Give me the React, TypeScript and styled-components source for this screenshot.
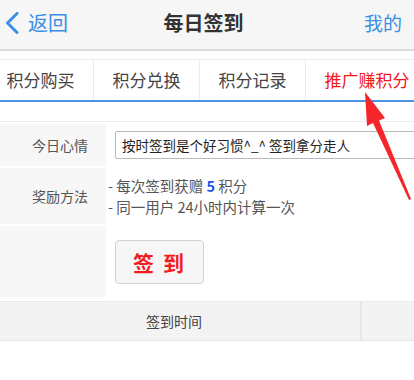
import styled, { createGlobalStyle } from 'styled-components';

const GlobalStyle = createGlobalStyle`
	html, body {
		margin: 0;
		padding: 0;
		background: #fff;
	}
	body {
		font-family: 'Noto Sans CJK SC', 'Noto Sans', sans-serif;
		color: #333;
	}
`;

const tabs = ['积分购买', '积分兑换', '积分记录', '推广赚积分'];

const App = () => {
	return (
		<Page>
			<GlobalStyle />
			<Header>
				<BackLink>
					<svg width="14" height="22" viewBox="0 0 14 22">
						<path d="M12 1.5 L2.5 11 L12 20.5" fill="none" stroke="#3a8ee6" strokeWidth="3" strokeLinecap="round" strokeLinejoin="round" />
					</svg>
					<span>返回</span>
				</BackLink>
				<Title>每日签到</Title>
				<HeaderLink>我的</HeaderLink>
			</Header>

			<TabBar>
				<TabTrack>
					{tabs.map((tab, i) => (
						<Tab key={tab} $active={i === tabs.length - 1}>
							{tab}
						</Tab>
					))}
				</TabTrack>
			</TabBar>

			<Form>
				<Row $height={42}>
					<Label>今日心情</Label>
					<Field>
						<MoodInput defaultValue="按时签到是个好习惯^_^ 签到拿分走人" />
					</Field>
				</Row>
				<Row $height={56}>
					<Label>奖励方法</Label>
					<Field>
						<Rules>
							<li>
								- 每次签到获赠 <Points>5</Points> 积分
							</li>
							<li>- 同一用户 24小时内计算一次</li>
						</Rules>
					</Field>
				</Row>
				<Row $height={71}>
					<Label />
					<Field>
						<SignButton>签 到</SignButton>
					</Field>
				</Row>
			</Form>

			<TableHead>
				<HeadCell>签到时间</HeadCell>
				<HeadCell />
			</TableHead>

			<Arrow width="414" height="380" viewBox="0 0 414 380">
				<polygon
					points="365,92 385,118 379,120.5 411,199 409,200 373,123 367,126"
					fill="#f4262a"
				/>
			</Arrow>
		</Page>
	);
};

export default App;

const Page = styled.div`
	position: relative;
	width: 414px;
	height: 380px;
	overflow: hidden;
	background: #fff;
`;

const Header = styled.div`
	height: 51px;
	display: grid;
	grid-template-columns: 1fr auto 1fr;
	align-items: center;
	padding: 0 12px 4px 5px;
	box-sizing: border-box;
	background: #f6f6f6;
	border-bottom: 2px solid #dcdcdc;
	margin-bottom: 8px;
`;

const BackLink = styled.div`
	display: flex;
	align-items: center;
	gap: 9px;
	color: #3a8ee6;
	font-size: 20px;
`;

const Title = styled.div`
	font-size: 20px;
	font-weight: bold;
	color: #333;
`;

const HeaderLink = styled.div`
	justify-self: end;
	color: #3a8ee6;
	font-size: 19px;
`;

const TabBar = styled.div`
	border-top: 1px solid #ececec;
	border-bottom: 2px solid #4a92e4;
	overflow: hidden;
	white-space: nowrap;
`;

const TabTrack = styled.div`
	display: flex;
	margin-left: -12px;
`;

const Tab = styled.div<{ $active?: boolean }>`
	flex: none;
	height: 40px;
	line-height: 40px;
	padding: 0 18.5px;
	font-size: 17px;
	color: ${(p) => (p.$active ? '#f4161b' : '#444')};
	border-right: 1px solid #ececec;
`;

const Form = styled.div`
	margin-top: 19px;
	border-top: 1px solid #ededed;
	padding-top: 2px;
	display: flex;
	flex-direction: column;
	gap: 2px;
`;

const Row = styled.div<{ $height: number }>`
	display: grid;
	grid-template-columns: 106px 1fr;
	height: ${(p) => p.$height}px;
`;

const Label = styled.div`
	background: #f7f7f7;
	display: flex;
	align-items: center;
	justify-content: flex-end;
	padding-right: 18px;
	font-size: 14px;
	color: #555;
`;

const Field = styled.div`
	display: flex;
	align-items: center;
	padding-left: 9px;
	min-width: 0;
`;

const MoodInput = styled.input`
	width: 320px;
	height: 28px;
	box-sizing: border-box;
	margin-right: -40px;
	border: 1px solid #b9b9b9;
	border-radius: 2px;
	padding: 0 6px;
	font-family: 'Noto Sans CJK SC', sans-serif;
	font-size: 13.5px;
	color: #222;
	outline: none;
`;

const Rules = styled.ul`
	list-style: none;
	margin: 0 0 0 -7px;
	padding: 0;
	font-size: 14.5px;
	line-height: 21px;
	color: #555;
`;

const Points = styled.b`
	color: #1a56e8;
`;

const SignButton = styled.button`
	width: 89px;
	height: 44px;
	border: 1px solid #d2d2d2;
	border-radius: 4px;
	background: #f6f6f6;
	color: #f41a1f;
	font-family: 'Noto Sans CJK SC', sans-serif;
	font-size: 21px;
	font-weight: bold;
	letter-spacing: 2px;
`;

const TableHead = styled.div`
	margin-top: 4px;
	display: grid;
	grid-template-columns: 360px 1fr;
	height: 38px;
	background: #f3f3f3;
	border-top: 1px solid #e9e9e9;
	border-bottom: 1px solid #e6e6e6;
`;

const HeadCell = styled.div`
	display: flex;
	align-items: center;
	justify-content: center;
	padding-right: 12px;
	font-size: 14px;
	color: #444;
	& + & {
		border-left: 2px solid #e6e6e6;
	}
`;

const Arrow = styled.svg`
	position: absolute;
	left: 0;
	top: 0;
	pointer-events: none;
`;
